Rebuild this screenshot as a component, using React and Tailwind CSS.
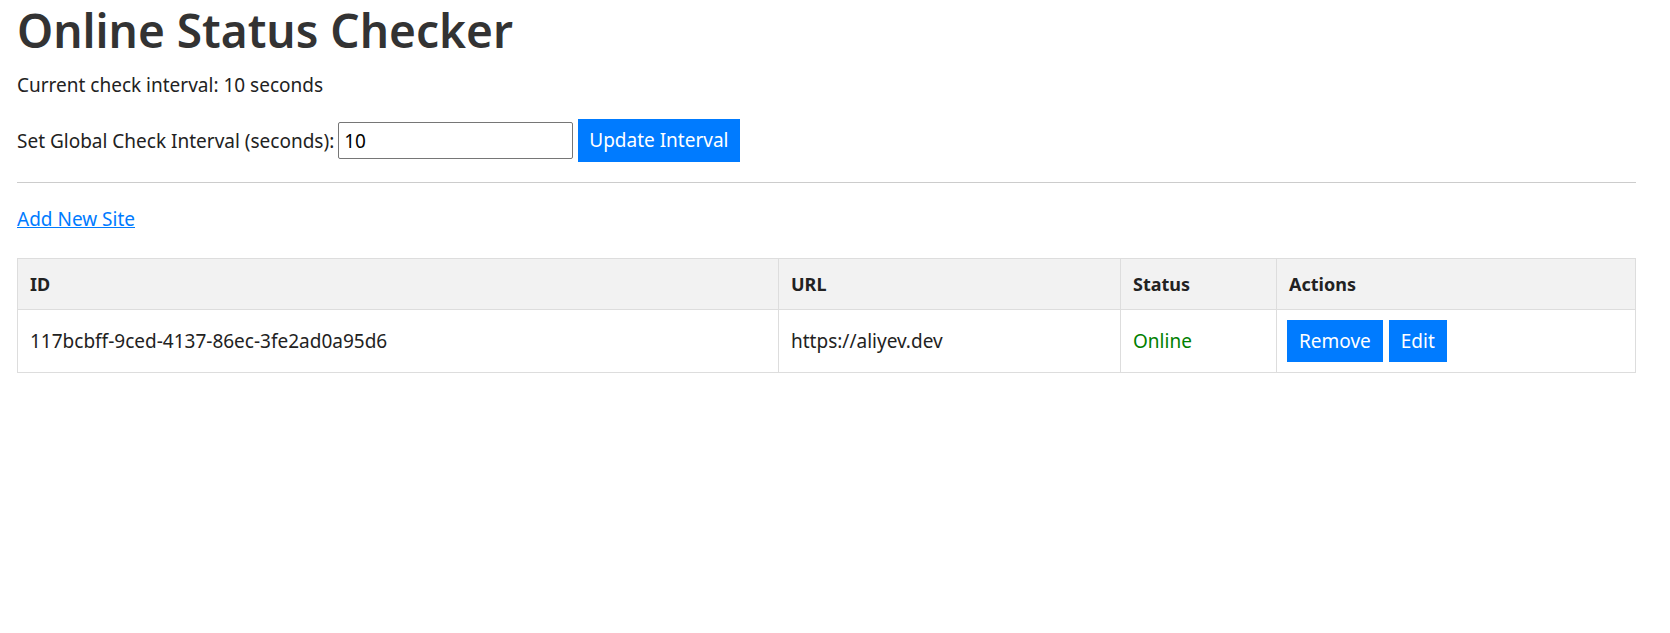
import React from 'react';

// Sites being watched
const sites = [
  { id: '117bcbff-9ced-4137-86ec-3fe2ad0a95d6', url: 'https://aliyev.dev', online: true },
];

function App() {
  return (
    <div className="pl-[17px] pr-[34px] text-[19px] text-[#333]" style={{ fontFamily: '"Noto Sans", "Open Sans", sans-serif' }}>
      <h1 className="text-[46px] font-semibold leading-[60px] text-[#333]">Online Status Checker</h1>
      <p className="mt-[12px] leading-[26px] text-[#222]">Current check interval: 10 seconds</p>

      <div className="mt-[21px] flex items-center text-[#222]">
        <label className="leading-[26px]">Set Global Check Interval (seconds):</label>
        <input
          type="number"
          defaultValue="10"
          className="ml-[4px] h-[37px] w-[235px] border border-[#767676] rounded-[2px] px-[5px] text-[19px] text-black outline-none"
        />
        <button className="ml-[5px] h-[43px] px-[11px] bg-[#007bff] text-white text-[19px]">Update Interval</button>
      </div>

      <hr className="mt-[20px] border-0 border-t border-[#ccc]" />

      <a href="#" className="block mt-[23px] w-fit leading-[26px] text-[#007bff] underline">Add New Site</a>

      <table className="mt-[26px] w-full border-collapse border border-[#ddd] text-left text-[#222]">
        <thead>
          <tr className="bg-[#f2f2f2] h-[51px]">
            <th className="w-[761px] border border-[#ddd] px-[12px] text-[18px] font-bold">ID</th>
            <th className="w-[342px] border border-[#ddd] px-[12px] text-[18px] font-bold">URL</th>
            <th className="w-[156px] border border-[#ddd] px-[12px] text-[18px] font-bold">Status</th>
            <th className="border border-[#ddd] px-[12px] text-[18px] font-bold">Actions</th>
          </tr>
        </thead>
        <tbody>
          {sites.map((s) => (
            <tr key={s.id} className="h-[63px]">
              <td className="border border-[#ddd] px-[12px]">{s.id}</td>
              <td className="border border-[#ddd] px-[12px]">{s.url}</td>
              <td className={`border border-[#ddd] px-[12px] ${s.online ? 'text-[#008000]' : 'text-[#d00]'}`}>
                {s.online ? 'Online' : 'Offline'}
              </td>
              <td className="border border-[#ddd] px-[10px]">
                <div className="flex gap-[6px]">
                  <button className="h-[42px] px-[12px] bg-[#007bff] text-white">Remove</button>
                  <button className="h-[42px] px-[12px] bg-[#007bff] text-white">Edit</button>
                </div>
              </td>
            </tr>
          ))}
        </tbody>
      </table>
    </div>
  );
}

export default App;
